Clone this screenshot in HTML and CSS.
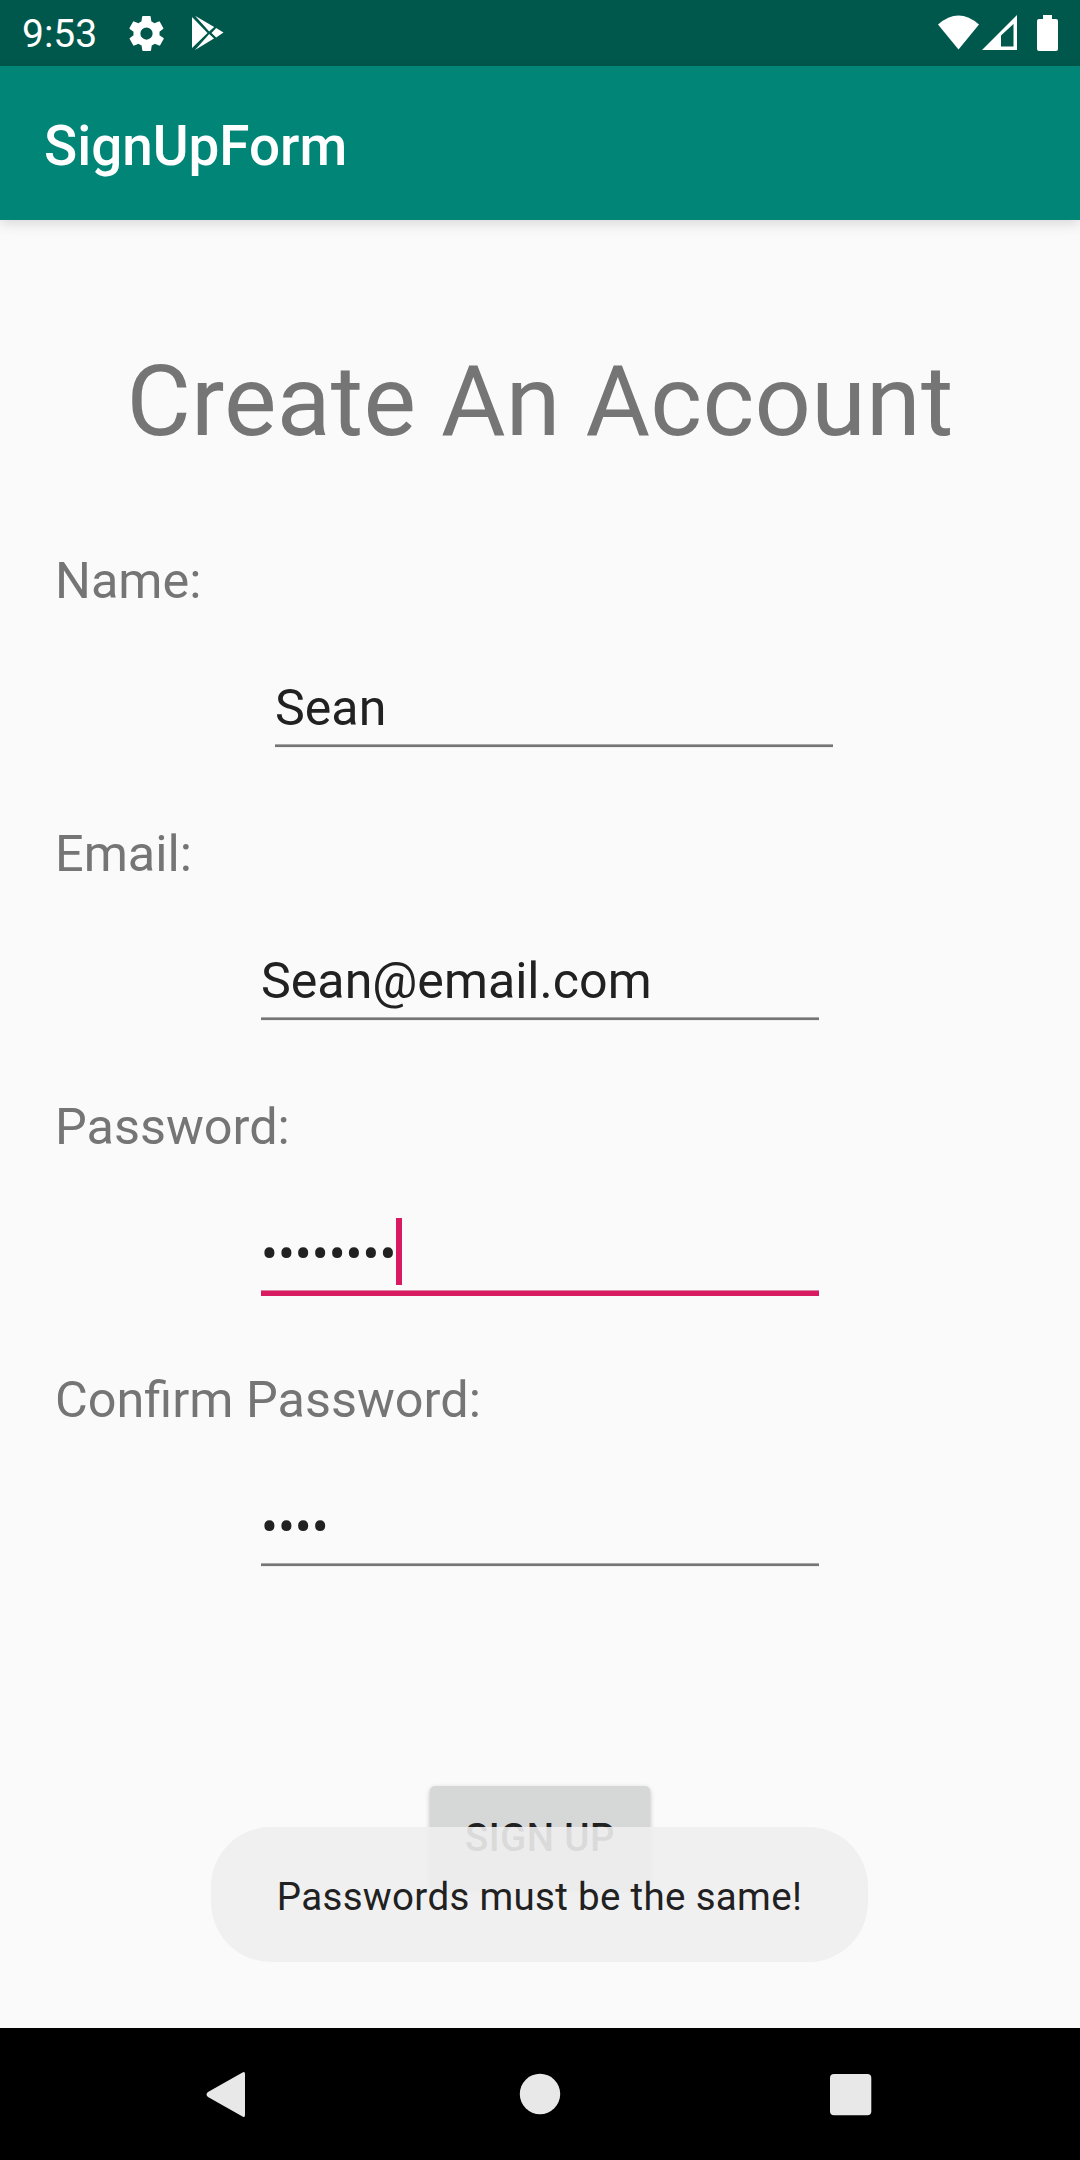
FILE: index.html
```html
<!DOCTYPE html>
<html lang="en">
<head>
<meta charset="utf-8">
<title>SignUpForm</title>
<link rel="stylesheet" href="styles.css">
</head>
<body>
<header class="status">
  <span class="time">9:53</span>
  <svg class="gear" viewBox="2 2 20 20"><path d="M19.4 13a7.500 7.500 0 0 0 0-2l2.100-1.600a.5.5 0 0 0 .1-.6l-2-3.500a.5.5 0 0 0-.6-.2l-2.500 1a7.300 7.300 0 0 0-1.700-1l-.4-2.600A.5.5 0 0 0 14 2h-4a.5.5 0 0 0-.5.4l-.4 2.700c-.6.2-1.200.6-1.700 1l-2.500-1a.5.5 0 0 0-.6.2l-2 3.500a.5.5 0 0 0 .1.6L4.600 11a7.500 7.500 0 0 0 0 2l-2.100 1.600a.5.5 0 0 0-.1.600l2 3.500c.1.200.4.300.6.200l2.500-1c.5.400 1.100.7 1.700 1l.4 2.700c0 .2.200.4.500.4h4c.2 0 .5-.2.500-.4l.4-2.700c.6-.2 1.200-.6 1.700-1l2.500 1c.2.100.5 0 .6-.2l2-3.500a.5.5 0 0 0-.1-.6zM12 15.500a3.500 3.500 0 1 1 0-7 3.500 3.500 0 0 1 0 7z" fill-rule="evenodd"/></svg>
  <svg class="play" viewBox="0 0 32 36"><path d="M0 2 15.500 18 0 33zM3 .8 22.200 12 17.200 16.500zM3 35 22 23.500 17.200 19zM24.200 13 31.500 17.500 24.200 22.500 19.500 18z"/></svg>
  <span class="grow"></span>
  <svg class="wifi" viewBox="0 0 41 36"><path d="M20.500 34.500 0 9.500Q20.500-8.500 41 9.500z"/></svg>
  <svg class="signal" viewBox="0 0 35 36"><path fill-rule="evenodd" d="M0 35 35 0v35zM19 31.500h12.500V9L19 20.500z"/></svg>
  <svg class="battery" viewBox="0 0 21 36"><path d="M6 0h9v4h4q2 0 2 2v28q0 2-2 2H2q-2 0-2-2V6q0-2 2-2h4z"/></svg>
</header>
<div class="appbar">SignUpForm</div>
<main class="form">
  <h1 class="title">Create An Account</h1>
  <div class="label">Name:</div>
  <div class="field first">Sean</div>
  <div class="label">Email:</div>
  <div class="field">Sean@email.com</div>
  <div class="label">Password:</div>
  <div class="field focused">••••••••<span class="caret"></span></div>
  <div class="label">Confirm Password:</div>
  <div class="field">••••</div>
  <button class="signup">SIGN UP</button>
</main>
<div class="toast">Passwords must be the same!</div>
<nav class="nav">
  <svg viewBox="0 0 48 48"><path d="M40 4v41q0 3-2.500 1.500L3 27q-3-2.500 0-5L37.500 2.500Q40 1 40 4z"/></svg>
  <svg viewBox="0 0 48 48"><circle cx="24" cy="24" r="20.200"/></svg>
  <svg viewBox="0 0 48 48"><rect x="3" y="4" width="41.300" height="41.300" rx="4"/></svg>
</nav>
</body>
</html>
```
FILE: styles.css
```css
* { box-sizing: border-box; }
body { margin: 0; width: 1080px; height: 2160px; display: flex; flex-direction: column; position: relative; background: #fafafa; color: #212121; font-family: Roboto, sans-serif; overflow: hidden; }
svg { flex: none; display: block; fill: currentColor; }
.status { height: 66px; background: #00574b; color: #fff; display: flex; align-items: center; padding: 0 22px; }
.time { font-size: 39px; width: 107px; line-height: 48px; padding-top: 1px; }
.gear { width: 35px; height: 35px; }
.play { width: 32px; height: 36px; margin-left: 28px; }
.grow { flex: 1; }
.wifi { width: 41px; height: 36px; }
.signal { width: 35px; height: 36px; margin-left: 3px; }
.battery { width: 21px; height: 36px; margin-left: 20px; }
.appbar { height: 154px; background: #008577; color: #fff; font-size: 54.8px; font-weight: 500; line-height: 160px; padding-left: 44px; box-shadow: 0 4px 12px rgba(0,0,0,.13); }
.form { flex: 1; display: flex; flex-direction: column; }
.title { margin: 122px 0 0; height: 116px; line-height: 118px; text-align: center; font-size: 99px; letter-spacing: .25px; font-weight: 400; color: #757575; }
.label { height: 66px; line-height: 66px; margin: 90px 0 0 55px; font-size: 50.4px; color: #757575; }
.field { width: 558px; height: 79px; margin: 54px 0 -16px 261px; line-height: 80px; font-size: 50.15px; border-bottom: 2px solid #757575; box-shadow: inset 0 -1px #a8a8a8, 0 1px #eee; display: flex; }
.first { margin-left: 275px; }
.focused { height: 82px; margin-bottom: -19px; border-bottom: 5px solid #d81b60; box-shadow: inset 0 -1px #dd84a7; }
.caret { width: 6px; height: 67px; margin-top: 4px; background: #d81b60; }
.signup { align-self: center; width: 220px; height: 102px; margin-top: 236px; border: 0; border-radius: 5px; background: #d6d7d7; font: 500 38.5px Roboto, sans-serif; letter-spacing: .4px; color: #212121; box-shadow: 0 2px 5px rgba(0,0,0,.25); }
.toast { position: absolute; left: 211px; top: 1827px; width: 657px; height: 135px; border-radius: 60px; background: rgba(238,238,238,.9); text-align: center; line-height: 139px; font-size: 38.5px; letter-spacing: .32px; }
.nav { height: 132px; background: #000; color: #e8e8e8; display: flex; align-items: center; justify-content: space-between; padding: 0 205px; }
.nav svg { width: 48px; height: 48px; }
```
